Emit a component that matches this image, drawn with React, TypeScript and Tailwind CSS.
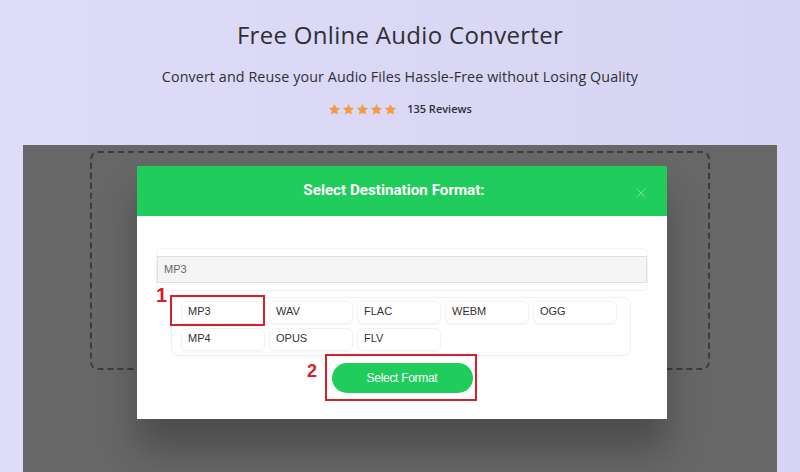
import { X } from "lucide-react";

const formats = ["MP3", "WAV", "FLAC", "WEBM", "OGG", "MP4", "OPUS", "FLV"];

function Star() {
  return (
    <svg viewBox="0 0 24 24" className="h-[13px] w-[13px]" fill="#f39a45">
      <path d="M12 1.8l3.1 6.6 7.2.9-5.3 5 1.4 7.1L12 17.9l-6.4 3.5 1.4-7.1-5.3-5 7.2-.9z" />
    </svg>
  );
}

export default function App() {
  return (
    <div className="flex h-[472px] w-[800px] flex-col overflow-hidden bg-gradient-to-r from-[#dedcf8] to-[#d6d4f2] font-['Open_Sans',sans-serif]">
      {/* Hero text */}
      <div className="flex flex-col items-center pt-[19px]">
        <h1 className="text-[24px] leading-[32px] tracking-[0.3px] text-[#2f2f35]">Free Online Audio Converter</h1>
        <p className="mt-[15px] text-[14.3px] leading-[22px] tracking-[0.1px] text-[#2f2f35]">
          Convert and Reuse your Audio Files Hassle-Free without Losing Quality
        </p>
        <div className="mt-[13px] flex items-center gap-[10px]">
          <div className="flex gap-[1px]">
            <Star />
            <Star />
            <Star />
            <Star />
            <Star />
          </div>
          <span className="text-[11px] font-semibold text-[#2f2f35]">135 Reviews</span>
        </div>
      </div>

      {/* Upload panel */}
      <div className="relative mx-[23px] mt-[27px] flex-1 bg-[#676767] pt-[6px]">
        <div className="mx-[67px] h-[219px] rounded-lg border-2 border-dashed border-[#3c3c3c]" />

        {/* Modal */}
        <div className="absolute left-[114px] top-[21px] flex h-[253px] w-[530px] flex-col bg-white font-['Liberation_Sans',Arial,sans-serif] shadow-[0_30px_34px_rgba(0,0,0,0.26)]">
          <div className="relative flex h-[50px] items-center justify-center bg-[#20cc5c] pr-4">
            <h2 className="font-['Roboto',sans-serif] text-[15.2px] font-bold text-white">Select Destination Format:</h2>
            <X className="absolute right-[18px] top-[19px] h-[16px] w-[16px] text-[#8be6ac]" strokeWidth={1.2} />
          </div>

          <div className="relative flex flex-col px-[19px] pt-[32px]">
            <div className="rounded-md border border-[#f3f3f3] py-[7px]">
              <div className="flex h-[27px] items-center border border-[#e0e0e0] bg-[#f5f5f5] px-[6px] text-[11px] text-[#666]">
                MP3
              </div>
            </div>

            <div className="ml-[15px] mt-[6px] w-[460px] rounded-lg border border-[#f0f0f0] px-[9px] pb-[4px] pt-[3px] shadow-[0_1px_2px_rgba(0,0,0,0.03)]">
              <div className="grid grid-cols-[repeat(5,84px)] gap-x-[4px] gap-y-[4px]">
                {formats.map((f) => (
                  <div
                    key={f}
                    className="flex h-[23px] items-center rounded-md border border-[#f2f2f2] px-[6px] pb-[2px] text-[11px] text-[#333] shadow-[0_1px_2px_rgba(0,0,0,0.04)]"
                  >
                    {f}
                  </div>
                ))}
              </div>
            </div>

            <div className="mt-[7px] flex justify-center">
              <button className="h-[30px] w-[141px] rounded-full bg-[#20cc5c] text-[12px] tracking-[-0.3px] text-white">
                Select Format
              </button>
            </div>

            {/* annotations */}
            <div className="absolute left-[33px] top-[79px] h-[31px] w-[95px] border-2 border-[#d6202c]" />
            <span className="absolute left-[19px] top-[69px] text-[20px] font-black leading-none text-[#d6202c]">
              1
            </span>
            <div className="absolute left-[188px] top-[138px] h-[47px] w-[152px] border-2 border-[#d6202c]" />
            <span className="absolute left-[170px] top-[146px] text-[18px] font-black leading-none text-[#d6202c]">
              2
            </span>
          </div>
        </div>
      </div>
    </div>
  );
}
